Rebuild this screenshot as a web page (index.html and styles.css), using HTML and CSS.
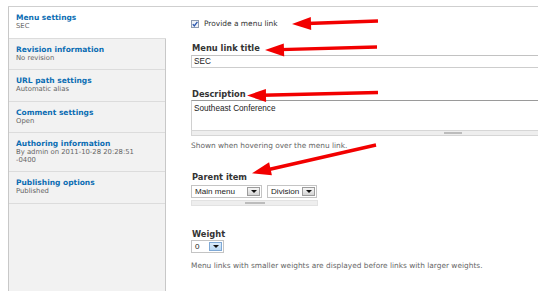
FILE: index.html
```html
<!DOCTYPE html>
<html>
<head>
<meta charset="utf-8">
<link rel="stylesheet" href="styles.css">
</head>
<body>
<div class="vt">
  <ul class="tabs">
    <li class="tab active"><span class="tt">Menu settings</span><span class="ts">SEC</span></li>
    <li class="tab"><span class="tt">Revision information</span><span class="ts">No revision</span></li>
    <li class="tab"><span class="tt">URL path settings</span><span class="ts">Automatic alias</span></li>
    <li class="tab"><span class="tt">Comment settings</span><span class="ts">Open</span></li>
    <li class="tab"><span class="tt">Authoring information</span><span class="ts">By admin on 2011-10-28 20:28:51 -0400</span></li>
    <li class="tab"><span class="tt">Publishing options</span><span class="ts">Published</span></li>
  </ul>
  <div class="pane">
    <div class="check-row">
      <span class="cb"><svg width="8" height="8" viewBox="0 0 8 8"><rect x="0.5" y="0.5" width="7" height="7" fill="#eef2f7" stroke="#8d9bb0"/><path d="M1.8 4.1 L3.3 5.9 L6.4 1.8" fill="none" stroke="#2a57b0" stroke-width="1.3"/></svg></span>
      <span class="cb-label">Provide a menu link</span>
    </div>

    <div class="lbl lbl-title">Menu link title</div>
    <div class="input">SEC</div>

    <div class="lbl lbl-desc">Description</div>
    <div class="textarea">Southeast Conference</div>
    <div class="grippie wide"><span class="handle"></span></div>
    <div class="help help-desc">Shown when hovering over the menu link.</div>

    <div class="lbl lbl-parent">Parent item</div>
    <div class="sel-row">
      <div class="sel sel-main"><span class="sel-txt">Main menu</span><span class="sel-btn"><span class="tri"></span></span></div>
      <div class="sel sel-div"><span class="sel-txt">Division</span><span class="sel-btn"><span class="tri"></span></span></div>
    </div>
    <div class="grippie narrow"><span class="handle"></span></div>

    <div class="lbl lbl-weight">Weight</div>
    <div class="sel sel-weight"><span class="sel-txt">0</span><span class="sel-btn blue"><span class="tri"></span></span></div>
    <div class="help help-weight">Menu links with smaller weights are displayed before links with larger weights.</div>
  </div>
</div>

<svg class="arrows" width="538" height="291" viewBox="0 0 538 291">
  <g fill="#f20000" stroke="#f20000">
    <line x1="307" y1="23.5" x2="378" y2="21" stroke-width="3.4"/>
    <polygon points="292,24 311.2,30 310.8,17" stroke="none"/>
    <line x1="280" y1="49.6" x2="377" y2="47" stroke-width="3.4"/>
    <polygon points="265,50 284.2,56.5 283.8,43.5" stroke="none"/>
    <line x1="262" y1="95.2" x2="378" y2="92.5" stroke-width="3.4"/>
    <polygon points="247,95.5 266.1,102 265.9,89" stroke="none"/>
    <line x1="266.6" y1="170" x2="376" y2="145" stroke-width="3.4"/>
    <polygon points="252,173.3 271.9,175.3 269.1,162.3" stroke="none"/>
  </g>
</svg>
</body>
</html>
```

FILE: styles.css
```css
html, body {
  margin: 0;
  padding: 0;
}
body {
  width: 538px;
  height: 291px;
  overflow: hidden;
  position: relative;
  background: #fff;
  font-family: "DejaVu Sans", Verdana, sans-serif;
  color: #333;
}
.vt {
  display: flex;
  margin: 6px 0 0 8px;
  border-top: 1px solid #cfcfcf;
  height: 284px;
}
.tabs {
  list-style: none;
  margin: 0;
  padding: 0;
  box-sizing: border-box;
  width: 158px;
  flex-shrink: 0;
  border-left: 1px solid #c8c8c8;
  border-right: 1px solid #c8c8c8;
  background: #f2f2f2;
  display: flex;
  flex-direction: column;
}
.tab {
  display: flex;
  flex-direction: column;
  padding: 6px 18px 7px 7px;
  border-bottom: 1px solid #dcdcdc;
}
.tab.active {
  background: #fff;
  margin-right: -1px;
}
.tt {
  font-size: 7.5px;
  line-height: 10px;
  font-weight: bold;
  color: #0b6db3;
  white-space: nowrap;
}
.ts {
  font-size: 6.85px;
  line-height: 7.5px;
  color: #666;
}
.pane {
  flex: 1;
  min-width: 0;
  overflow: hidden;
  padding: 13px 0 0 25px;
}
.check-row {
  display: flex;
  align-items: center;
  gap: 5px;
  height: 8px;
}
.cb {
  display: block;
  width: 8px;
  height: 8px;
}
.cb svg {
  display: block;
}
.cb-label {
  font-size: 7.45px;
  line-height: 8px;
  color: #333;
  white-space: nowrap;
}
.lbl {
  font-size: 8.3px;
  line-height: 10px;
  font-weight: bold;
  color: #333;
  padding-left: 1px;
  white-space: nowrap;
}
.lbl-title { margin-top: 15px; }
.lbl-desc { margin-top: 21px; }
.lbl-parent { margin-top: 22px; }
.lbl-weight { margin-top: 23px; }

.input {
  margin-top: 2px;
  box-sizing: border-box;
  width: 560px;
  height: 13px;
  border: 1px solid #cdcdcd;
  border-top-color: #c2c2c2;
  font-family: "Liberation Sans", Arial, sans-serif;
  font-size: 8.2px;
  line-height: 11px;
  padding-left: 2px;
  color: #222;
}
.textarea {
  margin-top: 1px;
  box-sizing: border-box;
  width: 524px;
  height: 30px;
  border: 1px solid #d0d0d0;
  border-top-color: #9a9a9a;
  border-bottom: none;
  font-family: "Liberation Sans", Arial, sans-serif;
  font-size: 8.2px;
  line-height: 11px;
  padding: 2px 0 0 2px;
  color: #222;
}
.grippie {
  box-sizing: border-box;
  height: 6px;
  background: #eee;
  border: 1px solid #d6d6d6;
  display: flex;
  justify-content: center;
  padding-top: 1px;
}
.grippie.wide {
  width: 524px;
}
.grippie.narrow {
  width: 127px;
  margin-top: 2px;
  border-color: #e2e2e2;
}
.handle {
  display: block;
  width: 18px;
  height: 2px;
  background: #bcbcbc;
}
.grippie.narrow .handle {
  width: 20px;
}
.help {
  font-size: 7.4px;
  line-height: 9px;
  color: #666;
  white-space: nowrap;
}
.help-desc { margin-top: 5px; }
.help-weight { margin-top: 8px; }

.sel-row {
  display: flex;
  gap: 5px;
  margin-top: 3px;
}
.sel {
  display: flex;
  box-sizing: border-box;
  height: 13px;
  border: 1px solid #c4c4c4;
  background: #fff;
}
.sel-main { width: 71px; }
.sel-div { width: 50px; }
.sel-weight { width: 33px; margin-top: 1px; }
.sel-txt {
  flex: 1;
  font-family: "Liberation Sans", Arial, sans-serif;
  font-size: 8.1px;
  line-height: 11px;
  padding-left: 3px;
  color: #222;
  white-space: nowrap;
  overflow: hidden;
}
.sel-btn {
  box-sizing: border-box;
  width: 13px;
  margin: 1px;
  border: 1px solid #9c9c9c;
  background: linear-gradient(#f6f6f6, #d4d4d4);
  display: flex;
  align-items: center;
  justify-content: center;
}
.sel-btn.blue {
  background: linear-gradient(#dcecfa, #b9d8f3);
  border-color: #7fa9d6;
}
.tri {
  width: 0;
  height: 0;
  border-left: 3px solid transparent;
  border-right: 3px solid transparent;
  border-top: 3px solid #111;
}
.arrows {
  position: absolute;
  top: 0;
  left: 0;
  pointer-events: none;
}
```
